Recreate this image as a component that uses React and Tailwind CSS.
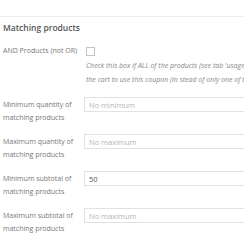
export default function App() {
  const rows = [
    ["Minimum quantity of", "matching products", "", "No minimum"],
    ["Maximum quantity of", "matching products", "", "No maximum"],
    ["Minimum subtotal of", "matching products", "50", "No minimum"],
    ["Maximum subtotal of", "matching products", "", "No maximum"],
  ];
  return (
    <div className="w-[244px] h-[244px] bg-white overflow-hidden font-['Open_Sans',sans-serif] text-[#777]">
      <div className="h-[16px]" />
      <div className="h-px bg-[#eeeeee]" />
      <h3 className="pl-[3px] mt-[5px] text-[8.5px] leading-[12px] font-semibold text-[#555]">
        Matching products
      </h3>
      <div className="flex mt-[10px]">
        <div className="w-[86px] shrink-0 pl-[3px] text-[7px] leading-[14px]">AND Products (not OR)</div>
        <div className="flex-1 min-w-0 overflow-hidden">
          <div className="mt-[3px] w-[9px] h-[9px] border border-[#c4c4c4] bg-white" />
          <p className="mt-[3px] text-[7px] leading-[14px] italic text-[#888] whitespace-nowrap">
            Check this box if ALL of the products (see tab 'usage restriction') must be in
            <br />
            the cart to use this coupon (in stead of only one of the products).
          </p>
        </div>
      </div>
      <div className="mt-[10px] flex flex-col">
        {rows.map(([a, b, v, ph], i) => (
          <div key={i} className="flex h-[37px] shrink-0">
            <div className="w-[84px] shrink-0 pl-[3px] pt-[1px] text-[7px] leading-[13px]">
              <div>{a}</div>
              <div>{b}</div>
            </div>
            <input
              readOnly
              value={v}
              placeholder={ph}
              className="w-[200px] shrink-0 h-[15px] border border-[#e2e2e2] pl-[4px] text-[7.5px] text-[#555] placeholder:text-[#b4b4b4] outline-none bg-white"
            />
          </div>
        ))}
      </div>
    </div>
  );
}
